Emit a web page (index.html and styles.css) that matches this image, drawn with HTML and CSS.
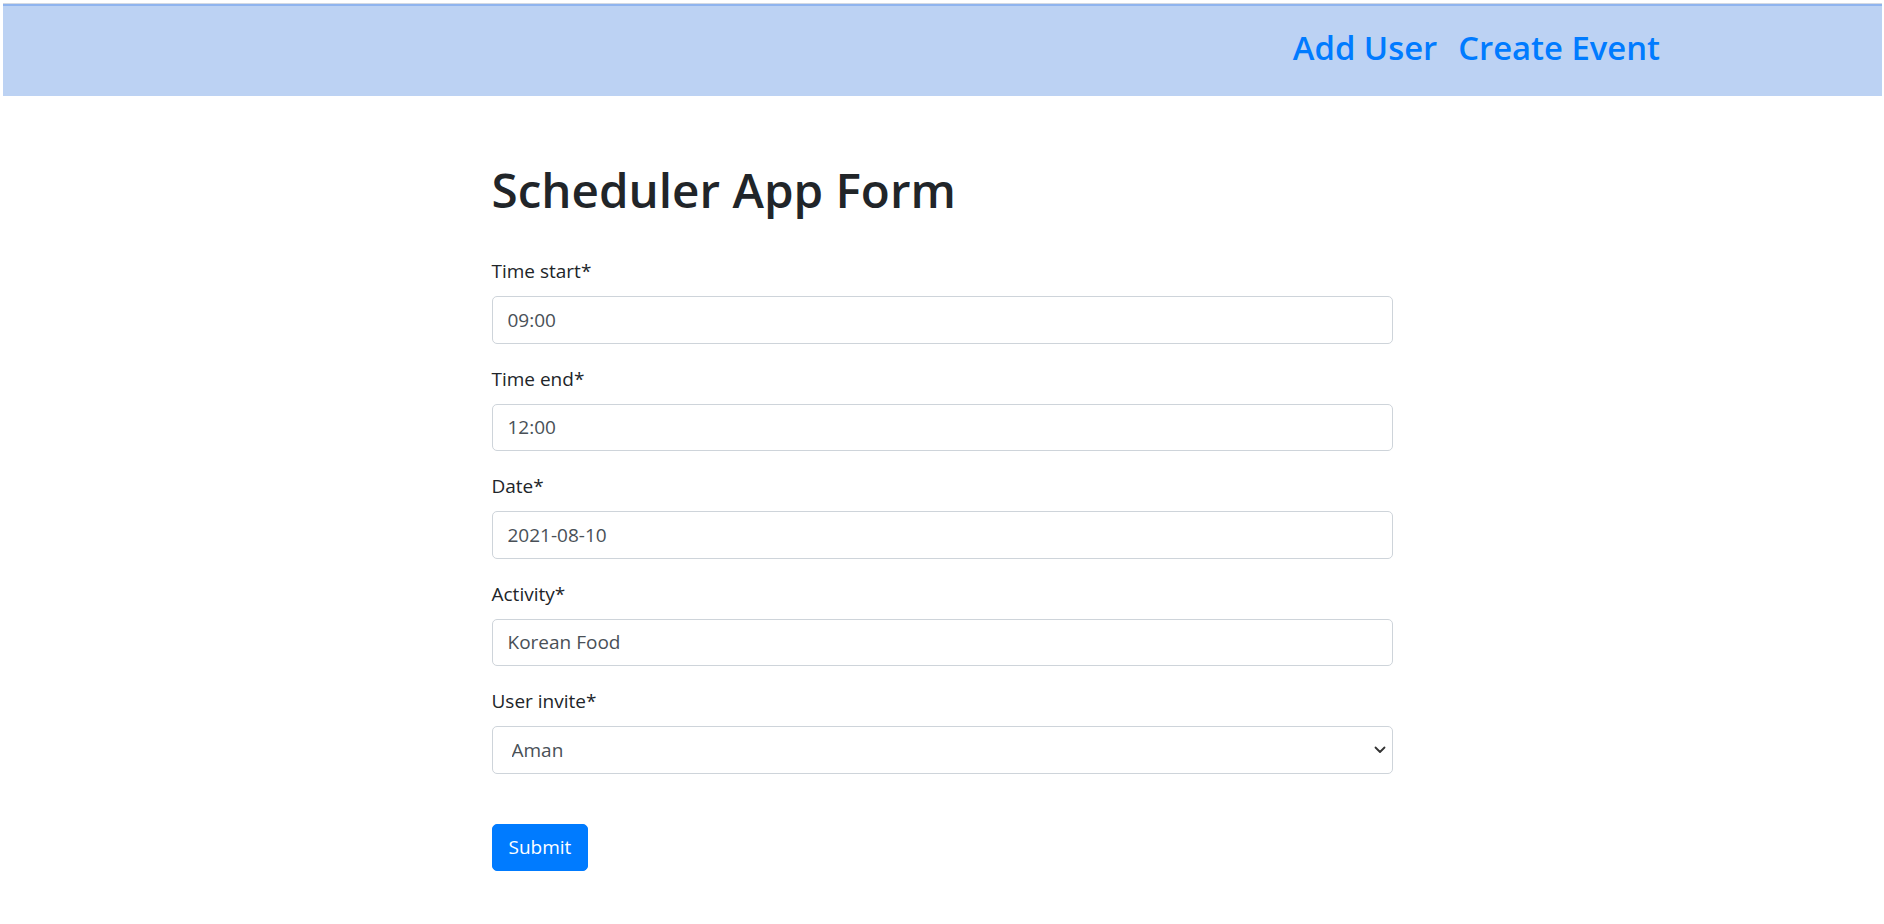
FILE: index.html
```html
<!DOCTYPE html>
<html lang="en">
<head>
<meta charset="utf-8">
<title>Scheduler App</title>
<link rel="stylesheet" href="styles.css">
</head>
<body>
<header class="topbar">
  <nav class="nav">
    <a class="nav-link" href="#">Add User</a>
    <a class="nav-link" href="#">Create Event</a>
  </nav>
</header>
<main class="container">
  <h1 class="title">Scheduler App Form</h1>
  <form class="form">
    <div class="form-group">
      <label class="label" for="ts">Time start*</label>
      <input class="input" id="ts" type="text" value="09:00">
    </div>
    <div class="form-group">
      <label class="label" for="te">Time end*</label>
      <input class="input" id="te" type="text" value="12:00">
    </div>
    <div class="form-group">
      <label class="label" for="dt">Date*</label>
      <input class="input" id="dt" type="text" value="2021-08-10">
    </div>
    <div class="form-group">
      <label class="label" for="ac">Activity*</label>
      <input class="input" id="ac" type="text" value="Korean Food">
    </div>
    <div class="form-group">
      <label class="label" for="ui">User invite*</label>
      <div class="select-wrap">
        <select class="input select" id="ui">
          <option>Aman</option>
        </select>
        <svg class="chevron" width="12" height="8" viewBox="0 0 12 8" aria-hidden="true"><path d="M1.5 1.5 L6 6 L10.5 1.5" fill="none" stroke="#333" stroke-width="1.8" stroke-linecap="round" stroke-linejoin="round"/></svg>
      </div>
    </div>
    <div class="actions">
      <button class="btn" type="button">Submit</button>
    </div>
  </form>
</main>
</body>
</html>
```

FILE: styles.css
```css
* { box-sizing: border-box; }
html, body { margin: 0; padding: 0; background: #fff; }
body {
  font-family: "Open Sans", "Noto Sans", sans-serif;
  font-size: 20px;
  line-height: 1.5;
  color: #212529;
}
.topbar {
  margin: 3px 2px 0 3px;
  height: 93px;
  background: #bcd2f3;
  border-top: 1px solid #d3d9e2;
  box-shadow: inset 0 2px 0 #8fb4ee;
  display: flex;
  align-items: center;
  justify-content: flex-end;
  padding-right: 222px;
  padding-bottom: 4px;
}
.nav { display: flex; gap: 21px; }
.nav-link {
  color: #007bff;
  text-decoration: none;
  font-size: 32.8px;
  font-weight: 600;
  line-height: 1.2;
}
.container {
  width: 901px;
  margin: 0 auto;
  padding-top: 64px;
}
.title {
  margin: 0 0 36px;
  font-size: 47.6px;
  font-weight: 600;
  line-height: 60px;
  color: #212529;
}
.form-group { margin-bottom: 20px; display: flex; flex-direction: column; }
.label { display: block; margin-bottom: 10px; line-height: 30px; font-size: 19px; }
.input {
  display: block;
  width: 100%;
  height: 47.5px;
  padding: 7.5px 15px;
  font-family: inherit;
  font-size: 19px;
  line-height: 30px;
  color: #495057;
  background: #fff;
  border: 1px solid #ced4da;
  border-radius: 5px;
}
.select-wrap { position: relative; }
.select {
  appearance: none;
  -webkit-appearance: none;
  padding-left: 19px;
}
.chevron { position: absolute; right: 7px; top: 20px; }
.actions { padding-top: 30px; }
.btn {
  display: inline-block;
  height: 47.5px;
  padding: 7.5px 16px;
  font-family: inherit;
  font-size: 19px;
  line-height: 30px;
  color: #fff;
  background: #007bff;
  border: 1px solid #007bff;
  border-radius: 5px;
}
```
